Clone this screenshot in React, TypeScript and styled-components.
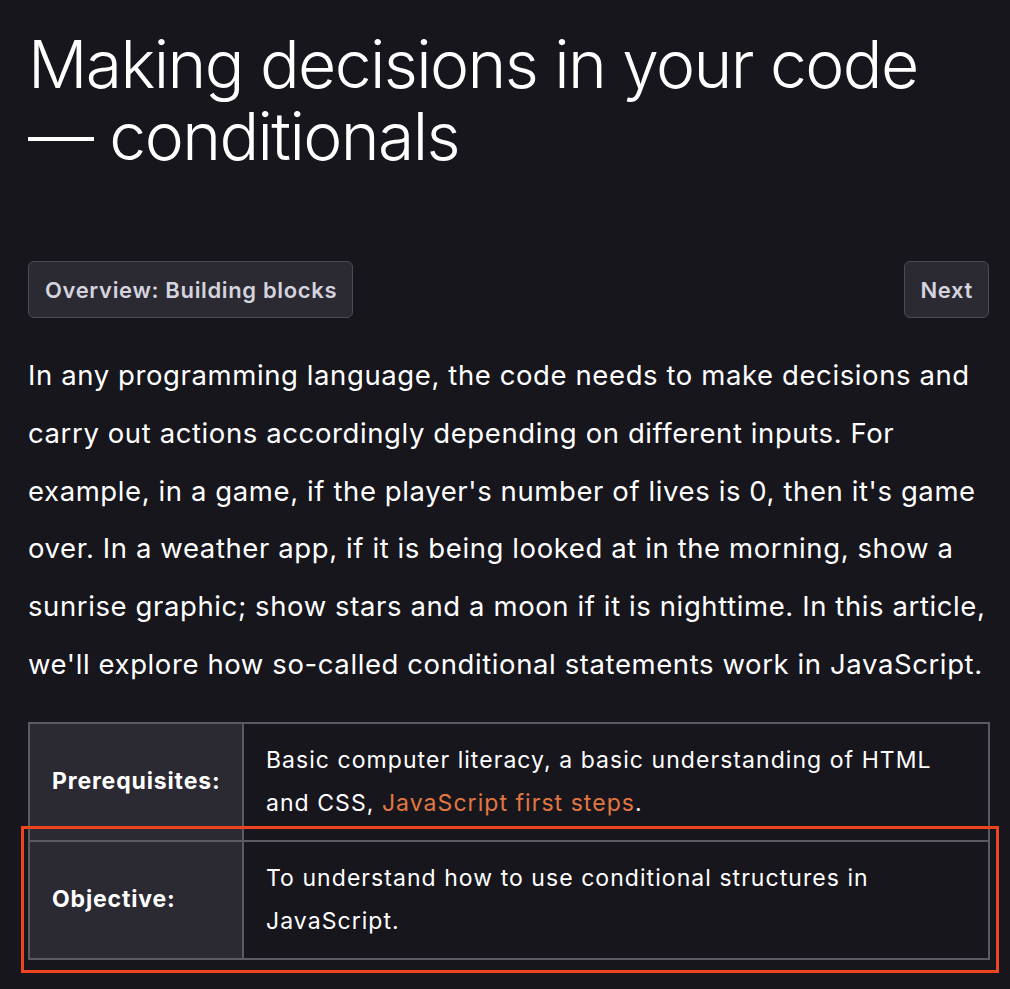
import React from "react";
import styled, { createGlobalStyle } from "styled-components";

const Global = createGlobalStyle`
  html, body { margin: 0; padding: 0; background: #17161d; }
  body { font-family: Inter, "Noto Sans", sans-serif; color: #ffffff; }
  * { box-sizing: border-box; }
`;

const Page = styled.main`
  width: 1010px;
  min-height: 989px;
  padding: 28px 20px 0 28px;
  background: #17161d;
`;

const Title = styled.h1`
  margin: 0;
  font-size: 66px;
  line-height: 72px;
  font-weight: 300;
  letter-spacing: -1.6px;
  color: #ffffff;
`;

const NavRow = styled.nav`
  display: flex;
  justify-content: space-between;
  margin-top: 89px;
  padding-right: 1px;
`;

const NavButton = styled.a`
  display: inline-flex;
  align-items: center;
  height: 57px;
  padding: 0 15px 0 16px;
  background: #2b2a33;
  border: 1px solid #4c4b55;
  border-radius: 6px;
  color: #d4d3de;
  font-size: 22px;
  font-weight: 600;
  letter-spacing: 0.65px;
  text-decoration: none;
`;

const Para = styled.p`
  margin: 29px 0 0;
  font-size: 27.5px;
  line-height: 57.8px;
  letter-spacing: 0.6px;
  color: #ffffff;
`;

const TableWrap = styled.div`
  position: relative;
  margin-top: 28px;
  width: 962px;
`;

const Table = styled.table`
  width: 100%;
  border-collapse: collapse;
  font-size: 23px;
  line-height: 43px;
`;

const HeadCell = styled.th`
  width: 214px;
  background: #2b2a33;
  border: 2px solid #5b5a63;
  padding: 15px 20px 15px 22px;
  text-align: left;
  font-weight: 700;
  letter-spacing: 0.85px;
  color: #ffffff;
`;

const Cell = styled.td<{ $h: number }>`
  height: ${(p) => p.$h}px;
  border: 2px solid #5b5a63;
  padding: 15px 22px;
  letter-spacing: 1.05px;
  color: #ffffff;
`;

const Link = styled.a`
  color: #e27740;
  text-decoration: none;
`;

const Highlight = styled.div`
  position: absolute;
  left: -7px;
  top: 104px;
  width: 978px;
  height: 147px;
  border: 3px solid #f0431f;
  pointer-events: none;
`;

export default function App() {
  return (
    <>
      <Global />
      <Page>
        <Title>Making decisions in your code — conditionals</Title>
        <NavRow>
          <NavButton href="#">Overview: Building blocks</NavButton>
          <NavButton href="#">Next</NavButton>
        </NavRow>
        <Para>
          In any programming language, the code needs to make decisions and carry out actions
          accordingly depending on different inputs. For example, in a game, if the player's
          number of lives is 0, then it's game over. In a weather app, if it is being looked at
          in the morning, show a sunrise graphic; show stars and a moon if it is nighttime. In
          this article, we'll explore how so-called conditional statements work in JavaScript.
        </Para>
        <TableWrap>
          <Table>
            <tbody>
              <tr>
                <HeadCell>Prerequisites:</HeadCell>
                <Cell $h={117}>
                  Basic computer literacy, a basic understanding of HTML and CSS,{" "}
                  <Link href="#">JavaScript first steps</Link>.
                </Cell>
              </tr>
              <tr>
                <HeadCell>Objective:</HeadCell>
                <Cell $h={116}>
                  To understand how to use conditional structures in JavaScript.
                </Cell>
              </tr>
            </tbody>
          </Table>
          <Highlight />
        </TableWrap>
      </Page>
    </>
  );
}
